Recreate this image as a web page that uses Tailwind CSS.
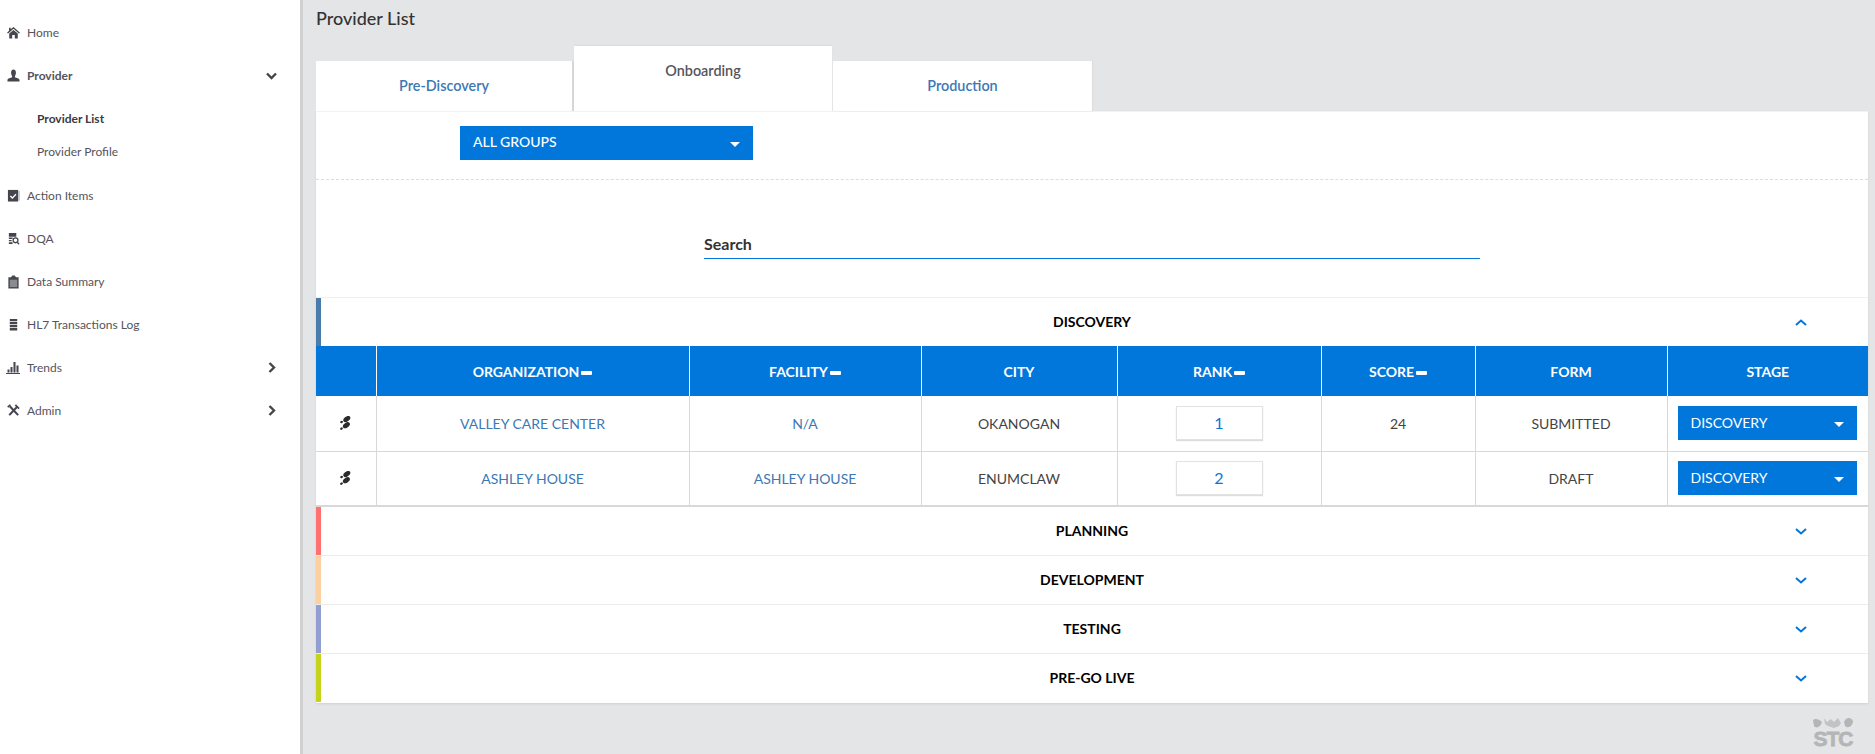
<!DOCTYPE html>
<html lang="en">
<head>
  <meta charset="UTF-8" />
  <title>Provider List</title>
  <script src="https://cdn.jsdelivr.net/npm/@tailwindcss/browser@4"></script>
</head>
<body class="h-[754px] overflow-hidden bg-[#e4e5e7] font-['Lato',sans-serif] text-[#444]">
<div class="flex h-[754px]">

  <!-- sidebar -->
  <aside class="w-[303px] shrink-0 bg-white border-r-[3px] border-[#cfd0d2] pt-[11px] text-[12px] text-[#55535c]">
    <a class="flex items-center h-[43px] pl-[7px]">
      <svg class="w-[13px] h-[13px] mr-[7px]" viewBox="0 0 14 14" fill="#44454d"><path d="M7 1 L14 7.2 L12.8 8 L7 3 L1.2 8 L0 7.2 L2.2 5.2 V2 H4 V3.6 Z M2.4 8.2 L7 4.3 L11.6 8.2 V13.5 H8.4 V9.6 H5.6 V13.5 H2.4 Z"/></svg>
      Home
    </a>
    <a class="flex items-center h-[43px] pl-[7px] pr-[23px] font-bold">
      <svg class="w-[13px] h-[13px] mr-[7px]" viewBox="0 0 14 14" fill="#44454d"><path d="M4.4 3.8 C4.4 1.6 5.6 .5 7 .5 S9.6 1.6 9.6 3.8 C9.6 5.6 9 7 8.5 7.8 V9 C10 9.6 13.5 10.2 13.5 12 V13.5 H.5 V12 C.5 10.2 4 9.6 5.5 9 V7.8 C5 7 4.4 5.6 4.4 3.8 Z"/></svg>
      Provider
      <svg class="ml-auto w-[11px] h-[8px]" viewBox="0 0 11 8" fill="none" stroke="#44454d" stroke-width="2.4"><path d="M1 1.5 L5.5 6 L10 1.5"/></svg>
    </a>
    <a class="flex items-center h-[33px] mt-[5px] pl-[37px] font-bold text-[#3a3a3f]">Provider List</a>
    <a class="flex items-center h-[33px] pl-[37px]">Provider Profile</a>
    <a class="flex items-center h-[43px] mt-[6px] pl-[7px]">
      <svg class="w-[13px] h-[13px] mr-[7px]" viewBox="0 0 14 14"><path d="M1 1 H12 V13.5 H1 Z" fill="#44454d"/><path d="M13 2 V12.5" stroke="#9a9ba0" stroke-width="1"/><path d="M3.6 7.6 L5.8 9.8 L9.6 5.6" fill="none" stroke="#fff" stroke-width="1.5"/></svg>
      Action Items
    </a>
    <a class="flex items-center h-[43px] pl-[7px]">
      <svg class="w-[13px] h-[13px] mr-[7px]" viewBox="0 0 14 14" fill="#44454d"><path d="M2 1 H10 V5 H2 Z M2 6 H6 V7.5 H2 Z M2 8.5 H5 V10 H2 Z M2 11 H6 V13 H2 Z"/><circle cx="9.2" cy="9" r="2.6" fill="none" stroke="#44454d" stroke-width="1.4"/><path d="M11 11 L13 13.2" stroke="#44454d" stroke-width="1.4"/></svg>
      DQA
    </a>
    <a class="flex items-center h-[43px] pl-[7px]">
      <svg class="w-[13px] h-[14px] mr-[7px]" viewBox="0 0 14 15"><path d="M1.5 2.5 H4.5 V1.5 H5.5 V.5 H8.5 V1.5 H9.5 V2.5 H12.5 V14.5 H1.5 Z" fill="#44454d"/><path d="M3 5 H11 V13 H3 Z" fill="#8a8b90"/></svg>
      Data Summary
    </a>
    <a class="flex items-center h-[43px] pl-[7px]">
      <svg class="w-[13px] h-[13px] mr-[7px]" viewBox="0 0 14 14" fill="#44454d"><path d="M3 1 H11 V3.6 H3 Z M3 4.4 H11 V6.8 H3 Z M3 7.6 H11 V10 H3 Z M3 10.8 H11 V13.4 H3 Z"/></svg>
      HL7 Transactions Log
    </a>
    <a class="flex items-center h-[43px] pl-[6px] pr-[24px]">
      <svg class="w-[14px] h-[13px] mr-[7px]" viewBox="0 0 14 13" fill="#44454d"><path d="M0 12 H14 V13 H0 Z M1.5 8.5 H3.5 V11.5 H1.5 Z M4.5 6 H6.5 V11.5 H4.5 Z M7.5 1 H9.5 V11.5 H7.5 Z M10.5 4.5 H12.5 V11.5 H10.5 Z"/></svg>
      Trends
      <svg class="ml-auto w-[8px] h-[11px]" viewBox="0 0 8 11" fill="none" stroke="#44454d" stroke-width="2.4"><path d="M1.5 1 L6 5.5 L1.5 10"/></svg>
    </a>
    <a class="flex items-center h-[43px] pl-[7px] pr-[24px]">
      <svg class="w-[13px] h-[13px] mr-[7px]" viewBox="0 0 14 14" fill="none" stroke="#44454d"><path d="M2.4 12 L11 3" stroke-width="2.2"/><path d="M9 1 L13 5" stroke-width="1.8"/><path d="M3 2.5 L12 12" stroke-width="2.2"/><path d="M.8 3.4 L3.6 .8" stroke-width="1.8"/></svg>
      Admin
      <svg class="ml-auto w-[8px] h-[11px]" viewBox="0 0 8 11" fill="none" stroke="#44454d" stroke-width="2.4"><path d="M1.5 1 L6 5.5 L1.5 10"/></svg>
    </a>
  </aside>

  <!-- main -->
  <main class="flex-1 min-w-0 pl-[13px] pr-[7px] relative">
    <h1 class="h-[46px] pt-[6px] text-[18px] leading-[24px] font-medium text-[#333]">Provider List</h1>

    <!-- tabs -->
    <div class="flex items-end h-[65px] text-[14.4px] font-semibold">
      <a class="w-[258px] h-[50px] bg-white flex items-center justify-center border-r-2 border-[#d6d6d6] text-[#3c78b4]">Pre-Discovery</a>
      <a class="w-[258px] h-[65px] bg-white pt-[14px] text-center text-[#55555c] shadow-[0_-1px_1px_#ddd]">Onboarding</a>
      <a class="w-[260px] h-[50px] bg-white flex items-center justify-center border-l border-[#e4e4e4] text-[#3c78b4] shadow-[1px_0_1px_#ddd]">Production</a>
    </div>

    <!-- card -->
    <section class="bg-white shadow-[0_1px_2px_#d0d0d0] border-t border-[#f2f2f2]">
      <div class="h-[68px] pt-[14px] pl-[144px] border-b border-dashed border-[#ddd]">
        <div class="w-[293px] h-[34px] bg-[#0277db] text-white text-[14px] font-medium flex items-center justify-between pl-[13px] pr-[13px]">
          <span class="-mt-[3px]">ALL GROUPS</span>
          <svg class="w-[10px] h-[5px] mt-[2px]" viewBox="0 0 10 5" fill="#fff"><path d="M0 0 H10 L5 5 Z"/></svg>
        </div>
      </div>
      <div class="h-[117px] pt-[54px] pl-[388px]">
        <div class="w-[776px] h-[25px] border-b border-[#0277db] text-[16px] font-bold text-[#333] leading-[20px]">Search</div>
      </div>

      <!-- discovery -->
      <div class="flex h-[49px] border-t border-[#efefef]">
        <span class="w-[5px] h-[48px] bg-[#4a7cab]"></span>
        <span class="w-[128px]"></span>
        <span class="flex-1 flex items-center justify-center pb-[2px] text-[14px] font-bold text-black">DISCOVERY</span>
        <span class="w-[133px] flex items-center pl-[60px]">
          <svg class="w-[12px] h-[7px]" viewBox="0 0 12 7" fill="none" stroke="#0277db" stroke-width="2"><path d="M1 6 L6 1.5 L11 6"/></svg>
        </span>
      </div>

      <table class="w-[1552px] table-fixed border-collapse text-[14px] text-center text-[#444]">
        <colgroup>
          <col class="w-[60px]" /><col class="w-[313px]" /><col class="w-[232px]" /><col class="w-[196px]" />
          <col class="w-[204px]" /><col class="w-[154px]" /><col class="w-[192px]" /><col class="w-[201px]" />
        </colgroup>
        <thead>
          <tr class="h-[50px] bg-[#0277db] text-white text-[14px] font-bold">
            <th></th>
            <th class="border-l border-white"><span class="-mt-[2px] inline-block">ORGANIZATION</span><span class="inline-block align-middle w-[11px] h-[4px] ml-[2px] bg-white rounded-[1px]"></span></th>
            <th class="border-l border-white"><span class="-mt-[2px] inline-block">FACILITY</span><span class="inline-block align-middle w-[11px] h-[4px] ml-[2px] bg-white rounded-[1px]"></span></th>
            <th class="border-l border-white"><span class="-mt-[2px] inline-block">CITY</span></th>
            <th class="border-l border-white"><span class="-mt-[2px] inline-block">RANK</span><span class="inline-block align-middle w-[11px] h-[4px] ml-[2px] bg-white rounded-[1px]"></span></th>
            <th class="border-l border-white"><span class="-mt-[2px] inline-block">SCORE</span><span class="inline-block align-middle w-[11px] h-[4px] ml-[2px] bg-white rounded-[1px]"></span></th>
            <th class="border-l border-white"><span class="-mt-[2px] inline-block">FORM</span></th>
            <th class="border-l border-white"><span class="-mt-[2px] inline-block">STAGE</span></th>
          </tr>
        </thead>
        <tbody>
          <tr class="h-[55px] border-b border-[#d8d8d8]">
            <td>
              <svg class="w-[11px] h-[14px] ml-[24px]" viewBox="0 0 11 14" fill="#2b2b2b"><ellipse cx="6.8" cy="3" rx="3.9" ry="2.4" transform="rotate(-35 6.8 3)"/><ellipse cx="1.6" cy="6" rx="1.5" ry="1.1" transform="rotate(-35 1.6 6)"/><ellipse cx="6.4" cy="9.2" rx="3.9" ry="2.4" transform="rotate(-35 6.4 9.2)"/><ellipse cx="1.5" cy="12.6" rx="1.5" ry="1.1" transform="rotate(-35 1.5 12.6)"/></svg>
            </td>
            <td class="border-l border-[#d8d8d8] text-[#3c78b4]">VALLEY CARE CENTER</td>
            <td class="border-l border-[#d8d8d8] text-[#3c78b4]">N/A</td>
            <td class="border-l border-[#d8d8d8]">OKANOGAN</td>
            <td class="border-l border-[#d8d8d8]">
              <div class="w-[87px] h-[34px] mx-auto flex items-center justify-center border border-[#e2e2e2] shadow-[0_1px_1px_#ddd] text-[16px] text-[#0277db]">1</div>
            </td>
            <td class="border-l border-[#d8d8d8]">24</td>
            <td class="border-l border-[#d8d8d8]">SUBMITTED</td>
            <td class="border-l border-[#d8d8d8]">
              <div class="w-[179px] h-[34px] ml-[10px] bg-[#0277db] text-white flex items-center justify-between pl-[13px] pr-[13px]">
                <span class="-mt-[2px]">DISCOVERY</span>
                <svg class="w-[10px] h-[5px] mt-[2px]" viewBox="0 0 10 5" fill="#fff"><path d="M0 0 H10 L5 5 Z"/></svg>
              </div>
            </td>
          </tr>
          <tr class="h-[55px] border-b-2 border-[#d8d8d8]">
            <td>
              <svg class="w-[11px] h-[14px] ml-[24px]" viewBox="0 0 11 14" fill="#2b2b2b"><ellipse cx="6.8" cy="3" rx="3.9" ry="2.4" transform="rotate(-35 6.8 3)"/><ellipse cx="1.6" cy="6" rx="1.5" ry="1.1" transform="rotate(-35 1.6 6)"/><ellipse cx="6.4" cy="9.2" rx="3.9" ry="2.4" transform="rotate(-35 6.4 9.2)"/><ellipse cx="1.5" cy="12.6" rx="1.5" ry="1.1" transform="rotate(-35 1.5 12.6)"/></svg>
            </td>
            <td class="border-l border-[#d8d8d8] text-[#3c78b4]">ASHLEY HOUSE</td>
            <td class="border-l border-[#d8d8d8] text-[#3c78b4]">ASHLEY HOUSE</td>
            <td class="border-l border-[#d8d8d8]">ENUMCLAW</td>
            <td class="border-l border-[#d8d8d8]">
              <div class="w-[87px] h-[34px] mx-auto flex items-center justify-center border border-[#e2e2e2] shadow-[0_1px_1px_#ddd] text-[16px] text-[#0277db]">2</div>
            </td>
            <td class="border-l border-[#d8d8d8]"></td>
            <td class="border-l border-[#d8d8d8]">DRAFT</td>
            <td class="border-l border-[#d8d8d8]">
              <div class="w-[179px] h-[34px] ml-[10px] bg-[#0277db] text-white flex items-center justify-between pl-[13px] pr-[13px]">
                <span class="-mt-[2px]">DISCOVERY</span>
                <svg class="w-[10px] h-[5px] mt-[2px]" viewBox="0 0 10 5" fill="#fff"><path d="M0 0 H10 L5 5 Z"/></svg>
              </div>
            </td>
          </tr>
        </tbody>
      </table>

      <!-- collapsed stages -->
      <div class="flex h-[49px] border-b border-[#ececec]">
        <span class="w-[5px] h-[48px] bg-[#ff7070]"></span>
        <span class="w-[128px]"></span>
        <span class="flex-1 flex items-center justify-center pb-[2px] text-[14px] font-bold text-black">PLANNING</span>
        <span class="w-[133px] flex items-center pl-[60px]"><svg class="w-[12px] h-[7px]" viewBox="0 0 12 7" fill="none" stroke="#0277db" stroke-width="2"><path d="M1 1 L6 5.5 L11 1"/></svg></span>
      </div>
      <div class="flex h-[49px] border-b border-[#ececec]">
        <span class="w-[5px] h-[48px] bg-[#fdd0a2]"></span>
        <span class="w-[128px]"></span>
        <span class="flex-1 flex items-center justify-center pb-[2px] text-[14px] font-bold text-black">DEVELOPMENT</span>
        <span class="w-[133px] flex items-center pl-[60px]"><svg class="w-[12px] h-[7px]" viewBox="0 0 12 7" fill="none" stroke="#0277db" stroke-width="2"><path d="M1 1 L6 5.5 L11 1"/></svg></span>
      </div>
      <div class="flex h-[49px] border-b border-[#ececec]">
        <span class="w-[5px] h-[48px] bg-[#939fd2]"></span>
        <span class="w-[128px]"></span>
        <span class="flex-1 flex items-center justify-center pb-[2px] text-[14px] font-bold text-black">TESTING</span>
        <span class="w-[133px] flex items-center pl-[60px]"><svg class="w-[12px] h-[7px]" viewBox="0 0 12 7" fill="none" stroke="#0277db" stroke-width="2"><path d="M1 1 L6 5.5 L11 1"/></svg></span>
      </div>
      <div class="flex h-[49px]">
        <span class="w-[5px] h-[48px] bg-[#c5d31d]"></span>
        <span class="w-[128px]"></span>
        <span class="flex-1 flex items-center justify-center pb-[2px] text-[14px] font-bold text-black">PRE-GO LIVE</span>
        <span class="w-[133px] flex items-center pl-[60px]"><svg class="w-[12px] h-[7px]" viewBox="0 0 12 7" fill="none" stroke="#0277db" stroke-width="2"><path d="M1 1 L6 5.5 L11 1"/></svg></span>
      </div>
    </section>

    <!-- logo -->
    <div class="absolute right-[22px] top-[717px] w-[40px] flex flex-col items-center text-[#b4b5b7]">
      <svg class="w-[40px] h-[13px]" viewBox="0 0 40 13" fill="#b4b5b7"><path d="M0 3 C2 1 6 2 9 5 C8 10 3 12 1 9 Z M31 5 C33 0 38 0 40 4 C40 9 35 12 32 9 Z"/><path d="M11 1 L14 5 L18 2 L21 5 L25 1 L28 6 L26 9 L21 11 L15 9 L12 7 Z" opacity=".7"/></svg>
      <span class="text-[21px] leading-[17px] tracking-[-1px] font-['Liberation_Sans',sans-serif] font-bold [-webkit-text-stroke:0.8px_#b4b5b7]">STC</span>
    </div>
  </main>
</div>
</body>
</html>
